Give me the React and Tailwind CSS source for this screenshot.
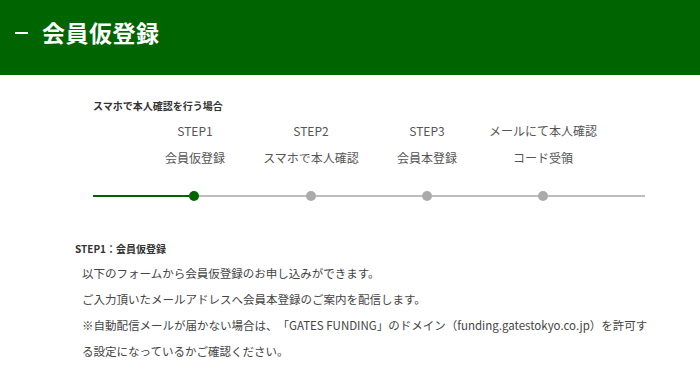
import React from "react";

const steps = [
  ["STEP1", "会員仮登録"],
  ["STEP2", "スマホで本人確認"],
  ["STEP3", "会員本登録"],
  ["メールにて本人確認", "コード受領"],
];

function Dot({ active }) {
  return <div className={active ? "w-[10px] h-[10px] rounded-full bg-[#006400] shrink-0" : "w-[10px] h-[10px] rounded-full bg-[#aaaaaa] shrink-0"} />;
}

export default function App() {
  return (
    <div className="w-[700px] h-[392px] bg-white overflow-hidden" style={{ fontFamily: '"Noto Sans CJK JP", "Noto Sans", sans-serif' }}>
      <div className="h-[75px] bg-[#006400] flex items-center pl-[15px] pb-[10px]">
        <div className="w-[13px] h-[2px] bg-white mr-[14px]" />
        <h1 className="text-[23px] font-bold text-white leading-none tracking-[0.5px]">会員仮登録</h1>
      </div>
      <div className="pl-[93px] pt-[24px]">
        <p className="text-[10px] font-bold text-[#333] leading-[14px]">スマホで本人確認を行う場合</p>
        <div className="flex ml-[44px] mt-[4px]">
          {steps.map(([a, b]) => (
            <div key={a} className="w-[116px] flex flex-col items-center text-[12px] text-[#555] leading-[27px]">
              <span>{a}</span>
              <span>{b}</span>
            </div>
          ))}
        </div>
        <div className="flex items-center w-[552px] h-[10px] mt-[20px]">
          <div className="w-[96px] h-[2px] bg-[#006400]" />
          <Dot active />
          <div className="w-[107px] h-[2px] bg-[#bdbdbd]" />
          <Dot />
          <div className="w-[106px] h-[2px] bg-[#bdbdbd]" />
          <Dot />
          <div className="w-[106px] h-[2px] bg-[#bdbdbd]" />
          <Dot />
          <div className="flex-1 h-[2px] bg-[#bdbdbd]" />
        </div>
      </div>
      <div className="pl-[75px] pt-[41px]">
        <p className="text-[10px] font-bold text-[#333] leading-[14px]">STEP1：会員仮登録</p>
        <div className="pl-[7px] mt-[4px] text-[11.5px] text-[#444] leading-[26px] [text-spacing-trim:space-all]">
          <p>以下のフォームから会員仮登録のお申し込みができます。</p>
          <p>ご入力頂いたメールアドレスへ会員本登録のご案内を配信します。</p>
          <p>※自動配信メールが届かない場合は、「GATES FUNDING」のドメイン（funding.gatestokyo.co.jp）を許可す</p>
          <p>る設定になっているかご確認ください。</p>
        </div>
      </div>
    </div>
  );
}
